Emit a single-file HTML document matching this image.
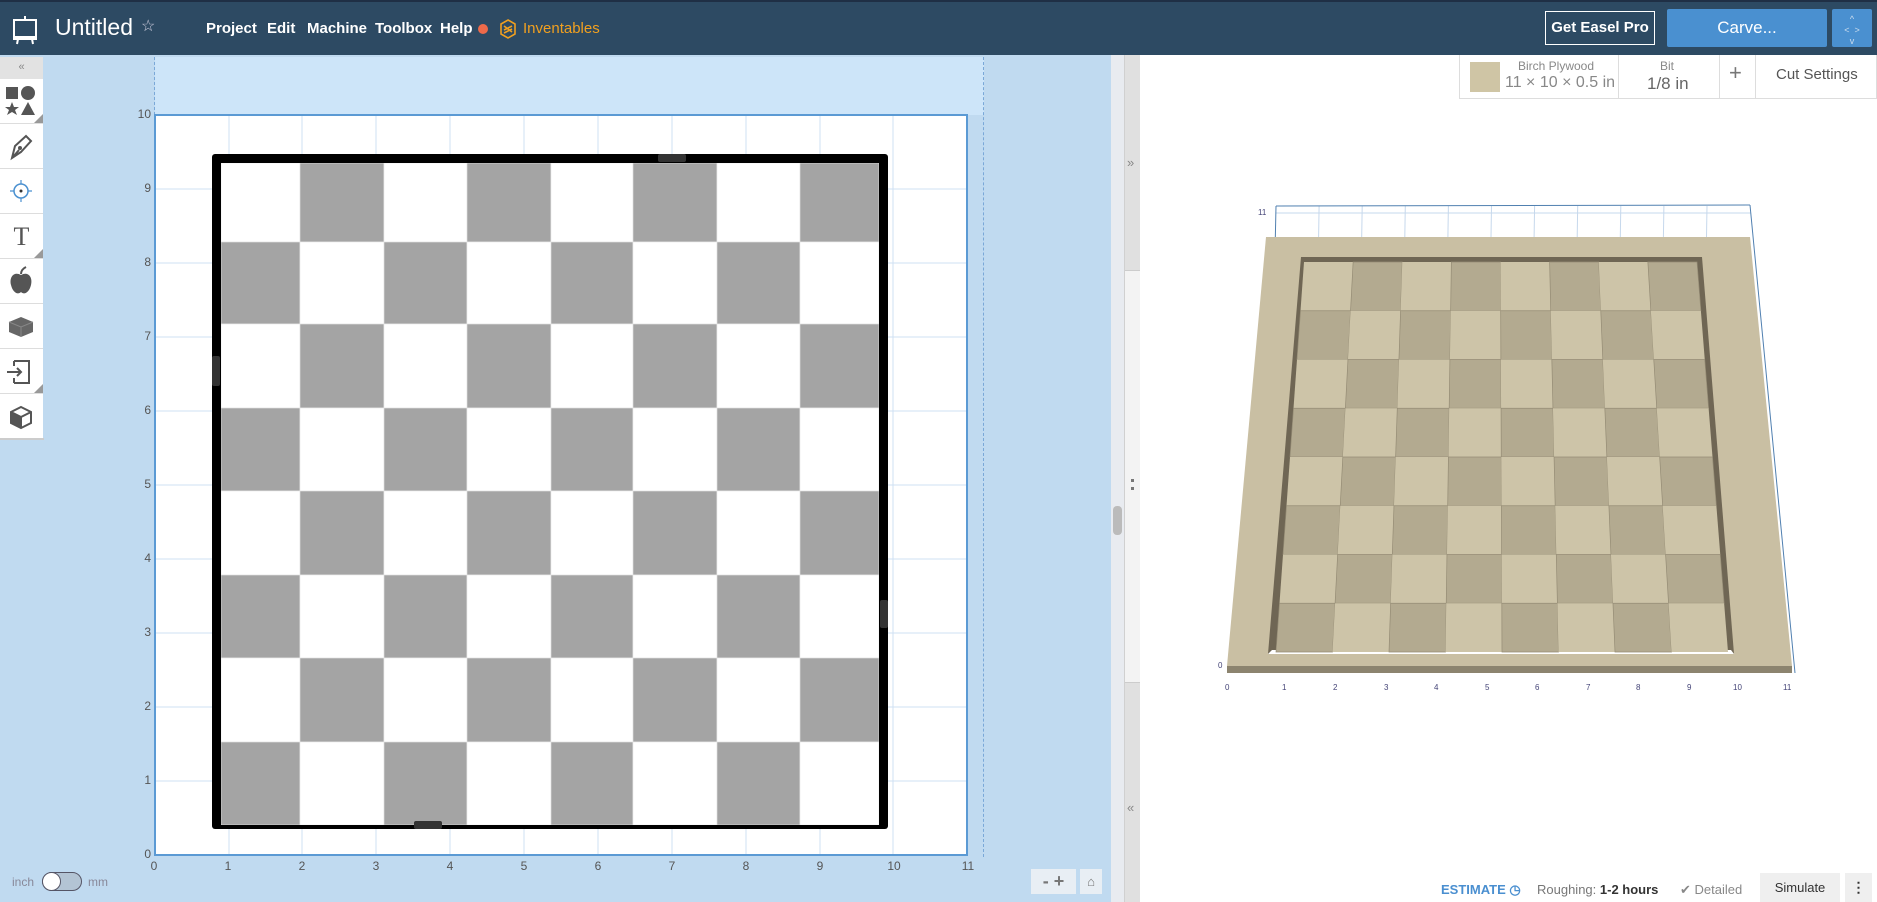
<!DOCTYPE html>
<html><head><meta charset="utf-8">
<style>
*{margin:0;padding:0;box-sizing:border-box}
body{width:1877px;height:902px;overflow:hidden;font-family:"Liberation Sans",sans-serif;background:#fff;position:relative}
.a{position:absolute}
#hdr{left:0;top:0;width:1877px;height:55px;background:#2d4a63;border-top:2px solid #1f2f45}
.menu{color:#fff;font-size:15px;font-weight:bold;top:18px}
.tb{left:0;width:43px;height:45px;background:#fff;border-bottom:1px solid #ddd}
.tri{position:absolute;right:0;bottom:0;width:0;height:0;border-left:9px solid transparent;border-bottom:9px solid #999}
.yl{font-size:12px;color:#555;width:20px;text-align:right;left:131px}
.xl{font-size:12px;color:#555;top:859px;width:20px;text-align:center}
</style></head><body>
<div id="hdr" class="a">
 <svg class="a" style="left:12px;top:13px" width="26" height="30" viewBox="0 0 26 30"><rect x="2" y="5" width="22" height="17" fill="none" stroke="#fff" stroke-width="2"/><line x1="13" y1="1" x2="13" y2="5" stroke="#fff" stroke-width="2"/><line x1="1" y1="24" x2="25" y2="24" stroke="#fff" stroke-width="2"/><line x1="6" y1="24" x2="5" y2="29" stroke="#fff" stroke-width="2"/><line x1="20" y1="24" x2="21" y2="29" stroke="#fff" stroke-width="2"/></svg>
 <div class="a" style="left:55px;top:12px;color:#fff;font-size:23px">Untitled</div>
 <div class="a" style="left:141px;top:14px;color:#ccd;font-size:16px">☆</div>
 <div class="a menu" style="left:206px">Project</div>
 <div class="a menu" style="left:267px">Edit</div>
 <div class="a menu" style="left:307px">Machine</div>
 <div class="a menu" style="left:375px">Toolbox</div>
 <div class="a menu" style="left:440px">Help</div>
 <div class="a" style="left:478px;top:22px;width:10px;height:10px;border-radius:50%;background:#ee6a4a"></div>
 <svg class="a" style="left:500px;top:17px" width="16" height="20" viewBox="0 0 16 20"><path d="M8 1 L15 5 V15 L8 19 L1 15 V5 Z M4 7 L12 13 M4 11 L12 7 M4 14 L12 10" fill="none" stroke="#f0a020" stroke-width="1.6"/></svg>
 <div class="a menu" style="left:523px;color:#f0a020;font-weight:normal">Inventables</div>
 <div class="a" style="left:1545px;top:9px;width:110px;height:34px;border:1px solid #fff;color:#fff;font-size:15px;font-weight:bold;text-align:center;line-height:32px">Get Easel Pro</div>
 <div class="a" style="left:1667px;top:7px;width:160px;height:38px;background:#4a90d0;color:#fff;font-size:17px;text-align:center;line-height:37px;border-radius:2px">Carve...</div>
 <div class="a" style="left:1832px;top:7px;width:40px;height:38px;background:#4a90d0;color:#cde;font-size:9px;text-align:center;line-height:11px;border-radius:2px;padding-top:5px">^<br>&lt;&nbsp;&nbsp;&gt;<br>v</div>
</div>

<div class="a" style="left:0;top:55px;width:1111px;height:847px;background:#c0daf0"></div>
<div class="a" style="left:155px;top:57px;width:829px;height:58px;background:#cde5f9"></div>
<div class="a" style="left:154px;top:57px;height:798px;border-left:1px dashed #7aa8d8"></div>
<div class="a" style="left:983px;top:57px;height:800px;border-left:1px dashed #7aa8d8"></div>
<svg class="a" style="left:154px;top:114px" width="815" height="742">
 <rect x="1" y="1" width="812" height="740" fill="#fff" stroke="#5b9ad4" stroke-width="2"/>
 <g stroke="#cfe1f3" stroke-width="1">
  <line x1="75" y1="2" x2="75" y2="740"/><line x1="148" y1="2" x2="148" y2="740"/><line x1="222" y1="2" x2="222" y2="740"/><line x1="296" y1="2" x2="296" y2="740"/><line x1="370" y1="2" x2="370" y2="740"/><line x1="444" y1="2" x2="444" y2="740"/><line x1="518" y1="2" x2="518" y2="740"/><line x1="592" y1="2" x2="592" y2="740"/><line x1="666" y1="2" x2="666" y2="740"/><line x1="739" y1="2" x2="739" y2="740"/>
  <line x1="2" y1="75" x2="812" y2="75"/><line x1="2" y1="149" x2="812" y2="149"/><line x1="2" y1="223" x2="812" y2="223"/><line x1="2" y1="297" x2="812" y2="297"/><line x1="2" y1="371" x2="812" y2="371"/><line x1="2" y1="445" x2="812" y2="445"/><line x1="2" y1="519" x2="812" y2="519"/><line x1="2" y1="593" x2="812" y2="593"/><line x1="2" y1="667" x2="812" y2="667"/>
 </g>
</svg>
<div class="a" style="left:212px;top:154px;width:676px;height:675px;background:#000;border-radius:3px"></div>
<svg class="a" style="left:221px;top:163px" width="658" height="662" id="cb"></svg>
<div class="a" style="left:658px;top:154px;width:28px;height:8px;background:#333;border-radius:2px"></div>
<div class="a" style="left:414px;top:821px;width:28px;height:8px;background:#333;border-radius:2px"></div>
<div class="a" style="left:212px;top:356px;width:8px;height:30px;background:#333;border-radius:2px"></div>
<div class="a" style="left:880px;top:600px;width:8px;height:28px;background:#333;border-radius:2px"></div>

<div class="a yl" style="top:107px">10</div><div class="a yl" style="top:181px">9</div><div class="a yl" style="top:255px">8</div><div class="a yl" style="top:329px">7</div><div class="a yl" style="top:403px">6</div><div class="a yl" style="top:477px">5</div><div class="a yl" style="top:551px">4</div><div class="a yl" style="top:625px">3</div><div class="a yl" style="top:699px">2</div><div class="a yl" style="top:773px">1</div><div class="a yl" style="top:847px">0</div>
<div class="a xl" style="left:144px">0</div><div class="a xl" style="left:218px">1</div><div class="a xl" style="left:292px">2</div><div class="a xl" style="left:366px">3</div><div class="a xl" style="left:440px">4</div><div class="a xl" style="left:514px">5</div><div class="a xl" style="left:588px">6</div><div class="a xl" style="left:662px">7</div><div class="a xl" style="left:736px">8</div><div class="a xl" style="left:810px">9</div><div class="a xl" style="left:884px">10</div><div class="a xl" style="left:958px">11</div>

<div class="a" style="left:0;top:57px;width:43px;height:22px;background:#e2e2e2;color:#888;font-size:11px;text-align:center;line-height:20px">«</div>
<div class="a tb" style="top:79px"><svg width="43" height="45"><rect x="6" y="8" width="12" height="12" fill="#555"/><circle cx="28" cy="14" r="7" fill="#555"/><polygon points="12,23 14,28 19,28 15,31 17,36 12,33 7,36 9,31 5,28 10,28" fill="#555"/><polygon points="28,23 35,36 21,36" fill="#555"/></svg><div class="tri"></div></div>
<div class="a tb" style="top:124px"><svg width="43" height="45"><path d="M12 34 L15 22 L26 12 L31 17 L21 28 Z M12 34 L19 26" fill="none" stroke="#555" stroke-width="2"/><circle cx="20" cy="24" r="2" fill="#555"/></svg></div>
<div class="a tb" style="top:169px"><svg width="43" height="45"><circle cx="21" cy="22" r="7" fill="none" stroke="#4a90d0" stroke-width="1.5"/><circle cx="21" cy="22" r="1.5" fill="#333"/><path d="M21 11V15M21 29V33M10 22H14M28 22H32" stroke="#4a90d0" stroke-width="1.2"/></svg></div>
<div class="a tb" style="top:214px"><div style="font-family:'Liberation Serif',serif;font-size:26px;color:#555;text-align:center;line-height:45px">T</div><div class="tri"></div></div>
<div class="a tb" style="top:259px"><svg width="43" height="45"><path d="M21 16 C14 12 9 18 11 26 C13 34 18 36 21 33 C24 36 29 34 31 26 C33 18 28 12 21 16 Z" fill="#555"/><path d="M21 15 C21 11 24 9 26 8" stroke="#555" stroke-width="2" fill="none"/></svg></div>
<div class="a tb" style="top:304px"><svg width="43" height="45"><path d="M9 18 L21 13 L33 18 L33 28 L21 33 L9 28 Z" fill="#666"/><path d="M9 18 L21 23 L33 18 M21 23 V33" stroke="#888" fill="none"/></svg></div>
<div class="a tb" style="top:349px"><svg width="43" height="45"><path d="M14 12 H29 V34 H14 M14 12 V17 M14 29 V34" fill="none" stroke="#555" stroke-width="2"/><path d="M7 23 H21 M17 19 L21 23 L17 27" fill="none" stroke="#555" stroke-width="2"/></svg><div class="tri"></div></div>
<div class="a tb" style="top:394px"><svg width="43" height="45"><path d="M21 13 L31 18 L31 29 L21 34 L11 29 L11 18 Z M11 18 L21 23 L31 18 M21 23 V34" fill="none" stroke="#555" stroke-width="2"/><path d="M11 18 L21 23 V34 L11 29 Z" fill="#555"/></svg></div>
<div class="a" style="left:0;top:438px;width:44px;height:2px;background:#ccc"></div>

<div class="a" style="left:12px;top:875px;font-size:12px;color:#889">inch</div>
<div class="a" style="left:42px;top:872px;width:40px;height:19px;border-radius:10px;background:#b3c4d4;border:1px solid #556"></div>
<div class="a" style="left:42px;top:872px;width:19px;height:19px;border-radius:50%;background:#fff;border:1px solid #556"></div>
<div class="a" style="left:88px;top:875px;font-size:12px;color:#889">mm</div>
<div class="a" style="left:1031px;top:869px;width:45px;height:25px;background:#e8eef4;color:#777;font-weight:bold;font-size:18px;line-height:24px;text-align:center">- +</div>
<div class="a" style="left:1080px;top:869px;width:22px;height:25px;background:#e8eef4;color:#777;font-size:13px;line-height:25px;text-align:center">⌂</div>

<div class="a" style="left:1111px;top:55px;width:13px;height:847px;background:#e8ebf0"></div>
<div class="a" style="left:1113px;top:506px;width:9px;height:29px;background:#bbb;border-radius:4px"></div>
<div class="a" style="left:1124px;top:55px;width:16px;height:847px;background:#e0e0e0;border-left:1px solid #d0d0d0"></div>
<div class="a" style="left:1125px;top:270px;width:15px;height:413px;background:#f3f3f3;border-top:1px solid #ccc;border-bottom:1px solid #ccc"></div>
<div class="a" style="left:1127px;top:155px;font-size:13px;color:#888">»</div>
<div class="a" style="left:1127px;top:800px;font-size:13px;color:#888">«</div>
<div class="a" style="left:1131px;top:479px;width:3px;height:11px;border-top:3px dotted #777;border-bottom:3px dotted #777"></div>

<div class="a" style="left:1459px;top:55px;width:418px;height:44px;border:1px solid #ddd;border-top:none;background:#fff"></div>
<div class="a" style="left:1470px;top:62px;width:30px;height:30px;background:#cfc5a5"></div>
<div class="a" style="left:1518px;top:59px;font-size:12px;color:#888">Birch Plywood</div>
<div class="a" style="left:1505px;top:74px;font-size:16px;color:#888">11 × 10 × 0.5 in</div>
<div class="a" style="left:1618px;top:55px;width:1px;height:44px;background:#ddd"></div>
<div class="a" style="left:1660px;top:59px;font-size:12px;color:#888">Bit</div>
<div class="a" style="left:1647px;top:74px;font-size:17px;color:#666">1/8 in</div>
<div class="a" style="left:1719px;top:55px;width:1px;height:44px;background:#ddd"></div>
<div class="a" style="left:1729px;top:60px;font-size:22px;color:#777">+</div>
<div class="a" style="left:1755px;top:55px;width:1px;height:44px;background:#ddd"></div>
<div class="a" style="left:1776px;top:66px;font-size:15px;color:#555">Cut Settings</div>

<svg class="a" style="left:1140px;top:190px" width="737" height="520" viewBox="1140 190 737 520" id="b3">
 <g stroke="#c6d8ec" stroke-width="1" fill="none" id="gl"></g>
 <line x1="1276" y1="206" x2="1266" y2="670" stroke="#5080b0" stroke-width="1"/>
 <line x1="1276" y1="206" x2="1750" y2="205" stroke="#5080b0" stroke-width="1"/>
 <line x1="1750" y1="205" x2="1795" y2="673" stroke="#5080b0" stroke-width="1"/>
 <polygon points="1266,237 1750,237 1792,666 1227,666" fill="#c9bfa3"/>
 <polygon points="1227,666 1792,666 1792,673 1227,673" fill="#8c846f"/>
 <polygon points="1301,257 1702,257 1734,654 1268,654" fill="#6f6654"/>
 <polygon points="1272,650 1731,650 1734,654 1268,654" fill="#fff"/>
 <g id="ch"></g>
 <g font-size="8" fill="#447" font-family="Liberation Sans">
 <text x="1225" y="690">0</text><text x="1282" y="690">1</text><text x="1333" y="690">2</text><text x="1384" y="690">3</text><text x="1434" y="690">4</text><text x="1485" y="690">5</text><text x="1535" y="690">6</text><text x="1586" y="690">7</text><text x="1636" y="690">8</text><text x="1687" y="690">9</text><text x="1733" y="690">10</text><text x="1783" y="690">11</text>
 <text x="1258" y="215">11</text><text x="1218" y="668">0</text>
 </g>
</svg>

<div class="a" style="left:1441px;top:882px;font-size:13px;color:#4a8fd0;font-weight:bold">ESTIMATE ◷</div>
<div class="a" style="left:1537px;top:882px;font-size:13px;color:#777">Roughing: <b style="color:#333">1-2 hours</b></div>
<div class="a" style="left:1680px;top:882px;font-size:13px;color:#888">✔ Detailed</div>
<div class="a" style="left:1760px;top:873px;width:80px;height:29px;background:#efefef;font-size:13px;color:#333;text-align:center;line-height:29px">Simulate</div>
<div class="a" style="left:1845px;top:873px;width:27px;height:29px;background:#efefef;font-size:14px;color:#333;text-align:center;line-height:29px;font-weight:bold">⋮</div>

<script>
var cb=document.getElementById('cb'),s='';
var xs=[0,79,163,246,330,412,496,579,658],ys=[0,79,161,245,328,412,495,579,662];
for(var r=0;r<8;r++)for(var c=0;c<8;c++){s+='<rect x="'+xs[c]+'" y="'+ys[r]+'" width="'+(xs[c+1]-xs[c])+'" height="'+(ys[r+1]-ys[r])+'" fill="'+((r+c)%2?'#a4a4a4':'#fff')+'" stroke="#e6e6e6" stroke-width="0.6"/>';}
cb.innerHTML=s;
var gl='';for(var i=1;i<11;i++){var x=1276+i*43.1;gl+='<line x1="'+x+'" y1="206" x2="'+(x-0.5)+'" y2="237"/>';}
gl+='<line x1="1276" y1="213" x2="1751" y2="213"/>';
document.getElementById('gl').innerHTML=gl;
function P(u,v){var x0=1304+(1697-1304)*u,x1=1276+(1728-1276)*u;return [x0+(x1-x0)*v,262+390*v];}
var g='';
for(var r=0;r<8;r++)for(var c=0;c<8;c++){var a=P(c/8,r/8),b=P((c+1)/8,r/8),d=P((c+1)/8,(r+1)/8),e=P(c/8,(r+1)/8);
var dark=(r+c)%2==1;
g+='<polygon points="'+a+' '+b+' '+d+' '+e+'" fill="'+(dark?'#b3aa90':'#cdc4a8')+'" stroke="'+(dark?'#958c75':'none')+'" stroke-width="0.7"/>';}
document.getElementById('ch').innerHTML=g;
</script>
</body></html>
